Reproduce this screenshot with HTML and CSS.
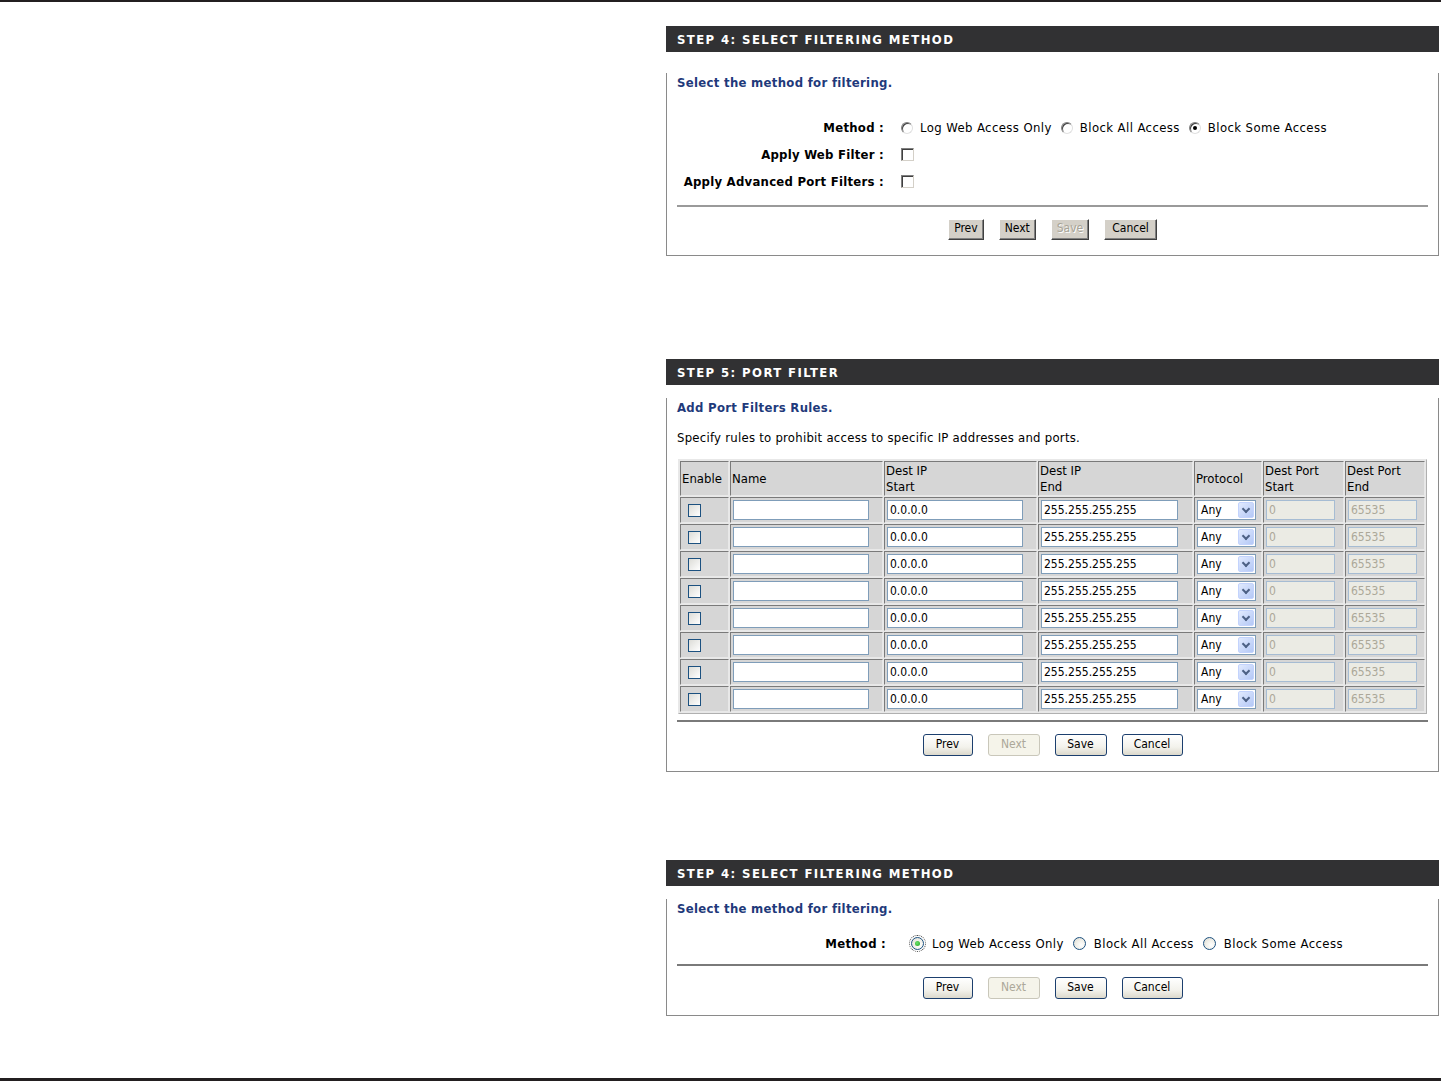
FILE: index.html
```html
<!DOCTYPE html>
<html>
<head>
<meta charset="utf-8">
<title>Filtering</title>
<link rel="stylesheet" href="styles.css">
</head>
<body>
<div class="rule-top"></div>
<main class="page">

  <section class="panel p1">
    <h2 class="phead">STEP 4: SELECT FILTERING METHOD</h2>
    <div class="pbody">
      <p class="lead">Select the method for filtering.</p>
      <div class="form classic">
        <div class="frow">
          <span class="flabel">Method :</span>
          <span class="fctl">
            <span class="radio-c"></span><span class="opt">Log Web Access Only</span>
            <span class="radio-c"></span><span class="opt">Block All Access</span>
            <span class="radio-c on"></span><span class="opt">Block Some Access</span>
          </span>
        </div>
        <div class="frow">
          <span class="flabel">Apply Web Filter :</span>
          <span class="fctl"><span class="check-c"></span></span>
        </div>
        <div class="frow">
          <span class="flabel">Apply Advanced Port Filters :</span>
          <span class="fctl"><span class="check-c"></span></span>
        </div>
      </div>
      <div class="sep"></div>
      <div class="btns">
        <span class="btn-c">Prev</span>
        <span class="btn-c">Next</span>
        <span class="btn-c dis">Save</span>
        <span class="btn-c">Cancel</span>
      </div>
    </div>
  </section>

  <section class="panel p2">
    <h2 class="phead">STEP 5: PORT FILTER</h2>
    <div class="pbody">
      <p class="lead">Add Port Filters Rules.</p>
      <p class="desc">Specify rules to prohibit access to specific IP addresses and ports.</p>
      <table class="rules">
        <colgroup>
          <col class="c-en"><col class="c-name"><col class="c-ip"><col class="c-ip2"><col class="c-proto"><col class="c-port"><col class="c-port2">
        </colgroup>
        <thead>
          <tr>
            <th>Enable</th>
            <th>Name</th>
            <th>Dest IP<br>Start</th>
            <th>Dest IP<br>End</th>
            <th>Protocol</th>
            <th>Dest Port<br>Start</th>
            <th>Dest Port<br>End</th>
          </tr>
        </thead>
        <tbody>
          <tr><td class="en"><span class="check-x"></span></td><td><span class="txt w-name"></span></td><td><span class="txt w-ip">0.0.0.0</span></td><td><span class="txt w-ip2">255.255.255.255</span></td><td><span class="sel">Any<span class="arrow"></span></span></td><td><span class="txt dis w-port">0</span></td><td><span class="txt dis w-port">65535</span></td></tr>
          <tr><td class="en"><span class="check-x"></span></td><td><span class="txt w-name"></span></td><td><span class="txt w-ip">0.0.0.0</span></td><td><span class="txt w-ip2">255.255.255.255</span></td><td><span class="sel">Any<span class="arrow"></span></span></td><td><span class="txt dis w-port">0</span></td><td><span class="txt dis w-port">65535</span></td></tr>
          <tr><td class="en"><span class="check-x"></span></td><td><span class="txt w-name"></span></td><td><span class="txt w-ip">0.0.0.0</span></td><td><span class="txt w-ip2">255.255.255.255</span></td><td><span class="sel">Any<span class="arrow"></span></span></td><td><span class="txt dis w-port">0</span></td><td><span class="txt dis w-port">65535</span></td></tr>
          <tr><td class="en"><span class="check-x"></span></td><td><span class="txt w-name"></span></td><td><span class="txt w-ip">0.0.0.0</span></td><td><span class="txt w-ip2">255.255.255.255</span></td><td><span class="sel">Any<span class="arrow"></span></span></td><td><span class="txt dis w-port">0</span></td><td><span class="txt dis w-port">65535</span></td></tr>
          <tr><td class="en"><span class="check-x"></span></td><td><span class="txt w-name"></span></td><td><span class="txt w-ip">0.0.0.0</span></td><td><span class="txt w-ip2">255.255.255.255</span></td><td><span class="sel">Any<span class="arrow"></span></span></td><td><span class="txt dis w-port">0</span></td><td><span class="txt dis w-port">65535</span></td></tr>
          <tr><td class="en"><span class="check-x"></span></td><td><span class="txt w-name"></span></td><td><span class="txt w-ip">0.0.0.0</span></td><td><span class="txt w-ip2">255.255.255.255</span></td><td><span class="sel">Any<span class="arrow"></span></span></td><td><span class="txt dis w-port">0</span></td><td><span class="txt dis w-port">65535</span></td></tr>
          <tr><td class="en"><span class="check-x"></span></td><td><span class="txt w-name"></span></td><td><span class="txt w-ip">0.0.0.0</span></td><td><span class="txt w-ip2">255.255.255.255</span></td><td><span class="sel">Any<span class="arrow"></span></span></td><td><span class="txt dis w-port">0</span></td><td><span class="txt dis w-port">65535</span></td></tr>
          <tr><td class="en"><span class="check-x"></span></td><td><span class="txt w-name"></span></td><td><span class="txt w-ip">0.0.0.0</span></td><td><span class="txt w-ip2">255.255.255.255</span></td><td><span class="sel">Any<span class="arrow"></span></span></td><td><span class="txt dis w-port">0</span></td><td><span class="txt dis w-port">65535</span></td></tr>
        </tbody>
      </table>
      <div class="sep s2"></div>
      <div class="btns">
        <span class="btn-x">Prev</span>
        <span class="btn-x dis">Next</span>
        <span class="btn-x">Save</span>
        <span class="btn-x">Cancel</span>
      </div>
    </div>
  </section>

  <section class="panel p3">
    <h2 class="phead">STEP 4: SELECT FILTERING METHOD</h2>
    <div class="pbody">
      <p class="lead">Select the method for filtering.</p>
      <div class="form xp">
        <div class="frow">
          <span class="flabel">Method :</span>
          <span class="fctl">
            <span class="radio-x on focus"></span><span class="opt">Log Web Access Only</span>
            <span class="radio-x"></span><span class="opt">Block All Access</span>
            <span class="radio-x"></span><span class="opt">Block Some Access</span>
          </span>
        </div>
      </div>
      <div class="sep s3"></div>
      <div class="btns b3">
        <span class="btn-x">Prev</span>
        <span class="btn-x dis">Next</span>
        <span class="btn-x">Save</span>
        <span class="btn-x">Cancel</span>
      </div>
    </div>
  </section>

</main>
<div class="rule-bottom"></div>
</body>
</html>
```
FILE: styles.css
```css
html, body {
  margin: 0;
  padding: 0;
  background: #ffffff;
}
body {
  width: 1441px;
  height: 1081px;
  overflow: hidden;
  font-family: "DejaVu Sans Condensed", "DejaVu Sans", sans-serif;
  font-size: 13px;
  color: #000;
  display: flex;
  flex-direction: column;
}
.rule-top {
  height: 2px;
  background: #231f20;
}
.rule-bottom {
  height: 3px;
  background: #231f20;
  margin-top: auto;
}
.page {
  padding-left: 666px;
  display: flex;
  flex-direction: column;
}
.panel {
  width: 773px;
  box-sizing: border-box;
}
.p1 { margin-top: 24px; }
.p2 { margin-top: 103px; }
.p3 { margin-top: 88px; }

.phead {
  margin: 0;
  height: 26px;
  line-height: 28px;
  background: #313133;
  color: #fff;
  font-size: 13px;
  font-weight: bold;
  letter-spacing: 1.4px;
  padding-left: 11px;
}
.pbody {
  border: 1px solid #8a8a8a;
  border-top: none;
  padding: 0 10px 15px 10px;
}
.p2 .pbody { padding-bottom: 15px; }
.p3 .pbody { padding-bottom: 16px; }

.lead {
  margin: 21px 0 0 0;
  line-height: 20px;
  font-weight: bold;
  color: #1f3a7b;
  font-size: 13px;
  letter-spacing: 0.3px;
}
.p2 .lead { margin-top: 13px; }
.p3 .lead { margin-top: 13px; }
.desc {
  margin: 10px 0 0 0;
  line-height: 20px;
  letter-spacing: 0.25px;
}

.form { margin-top: 21px; }
.p3 .form { margin-top: 11px; }
.frow {
  display: flex;
  align-items: center;
  height: 27px;
}
.flabel {
  width: 207px;
  text-align: right;
  font-weight: bold;
  flex: none;
  letter-spacing: 0.25px;
}
.xp .flabel { width: 209px; }
.fctl {
  display: flex;
  align-items: center;
  padding-left: 17px;
}
.xp .fctl { padding-left: 25px; }
.opt { margin: 0 9px 0 7px; letter-spacing: 0.4px; }
.xp .opt { margin: 0 9px 0 8px; }

/* classic radio */
.radio-c {
  width: 12px;
  height: 12px;
  box-sizing: border-box;
  border-radius: 50%;
  background: #fff;
  border: 1px solid;
  border-color: #808080 #e0e0e0 #e0e0e0 #808080;
  box-shadow: inset 1px 1px 0 #404040;
  position: relative;
  flex: none;
}
.radio-c.on::after {
  content: "";
  position: absolute;
  left: 3px;
  top: 3px;
  width: 4px;
  height: 4px;
  border-radius: 50%;
  background: #000;
}
/* classic checkbox */
.check-c {
  width: 13px;
  height: 13px;
  box-sizing: border-box;
  background: #fff;
  border: 1px solid;
  border-color: #808080 #d4d0c8 #d4d0c8 #808080;
  box-shadow: inset 1px 1px 0 #404040;
  display: inline-block;
}

/* xp radio */
.radio-x {
  width: 13px;
  height: 13px;
  box-sizing: border-box;
  border-radius: 50%;
  border: 1px solid #1c5180;
  background: radial-gradient(circle at 65% 65%, #ffffff 0%, #f0efe8 50%, #d8d7cf 100%);
  position: relative;
  flex: none;
}
.radio-x.on::after {
  content: "";
  position: absolute;
  left: 3px;
  top: 3px;
  width: 5px;
  height: 5px;
  border-radius: 50%;
  background: radial-gradient(circle at 40% 40%, #6be36b, #21a121);
}
.radio-x.focus {
  outline: 1px dotted #444;
  outline-offset: 1px;
}

/* separators */
.sep {
  height: 2px;
  background: #9a9a9a;
  margin-top: 10px;
}
.s2 { margin-top: 6px; background: #7a7a7a; }
.s3 { margin-top: 7px; background: #7a7a7a; }

.btns {
  display: flex;
  justify-content: center;
  gap: 15px;
  margin-top: 12px;
}
.b3 { margin-top: 11px; }

/* classic buttons */
.btn-c {
  height: 21px;
  box-sizing: border-box;
  line-height: 17px;
  font-size: 12px;
  padding: 0 5px;
  background: #d4d0c8;
  border: 1px solid;
  border-color: #ffffff #404040 #404040 #ffffff;
  box-shadow: inset -1px -1px 0 #808080;
  color: #000;
}
.btn-c:nth-child(4) { padding: 0 7px; }
.btn-c.dis {
  color: #a8a497;
  text-shadow: 1px 1px 0 #fff;
}

/* xp buttons */
.btn-x {
  height: 22px;
  box-sizing: border-box;
  line-height: 19px;
  font-size: 12px;
  text-align: center;
  border: 1px solid #1c3f6e;
  border-radius: 3px;
  background: linear-gradient(#ffffff, #f3f2ec 60%, #dcd9cc);
  color: #000;
}
.btn-x:nth-child(1) { width: 50px; }
.btn-x:nth-child(2) { width: 52px; }
.btn-x:nth-child(3) { width: 52px; }
.btn-x:nth-child(4) { width: 61px; }
.btn-x.dis {
  border-color: #c9c7ba;
  background: #f5f4ea;
  color: #aca899;
}

/* table */
.rules {
  margin-top: 11px;
  margin-left: 1px;
  width: 749px;
  table-layout: fixed;
  border-collapse: separate;
  border-spacing: 1px;
  border: 1px solid;
  border-color: #e8e8e8 #b0b0b0 #b0b0b0 #e8e8e8;
  background: #e8e8e8;
}
.c-en { width: 49px; }
.c-name { width: 153px; }
.c-ip { width: 153px; }
.c-ip2 { width: 155px; }
.c-proto { width: 68px; }
.c-port { width: 81px; }
.c-port2 { width: 80px; }
.rules th, .rules td {
  background: #d6d6d6;
  border: 1px solid;
  border-color: #7a7a7a #e8e8e8 #e8e8e8 #7a7a7a;
  padding: 0 0 0 1px;
  font-weight: normal;
  text-align: left;
  vertical-align: middle;
}
.rules th {
  height: 33px;
  line-height: 16px;
  font-size: 13px;
}
.rules td {
  height: 24px;
  padding-left: 2px;
}
.rules td.en { padding-left: 7px; }

.check-x {
  display: block;
  width: 13px;
  height: 13px;
  box-sizing: border-box;
  border: 1px solid #1c5180;
  background: linear-gradient(135deg, #dcdcd7, #ffffff);
}
.txt {
  display: block;
  height: 20px;
  box-sizing: border-box;
  border: 1px solid #7f9db9;
  background: #fff;
  line-height: 18px;
  padding-left: 2px;
  font-size: 12px;
}
.w-name { width: 136px; }
.w-ip { width: 136px; }
.w-ip2 { width: 137px; }
.w-port { width: 69px; }
.txt.dis {
  background: #ebebe4;
  color: #aca899;
  border-color: #a6bcd3;
}
.sel {
  display: flex;
  align-items: center;
  position: relative;
  width: 59px;
  height: 20px;
  box-sizing: border-box;
  border: 1px solid #7f9db9;
  background: #fff;
  padding-left: 3px;
  font-size: 12px;
}
.arrow {
  position: absolute;
  right: 1px;
  top: 1px;
  width: 16px;
  height: 16px;
  box-sizing: border-box;
  border-radius: 2px;
  background: linear-gradient(135deg, #e1eafe, #b4c8f6);
  border: 1px solid #c3d3fd;
}
.arrow::after {
  content: "";
  position: absolute;
  left: 4px;
  top: 3px;
  width: 4px;
  height: 4px;
  border: solid #4d6185;
  border-width: 0 2px 2px 0;
  transform: rotate(45deg);
}
```
